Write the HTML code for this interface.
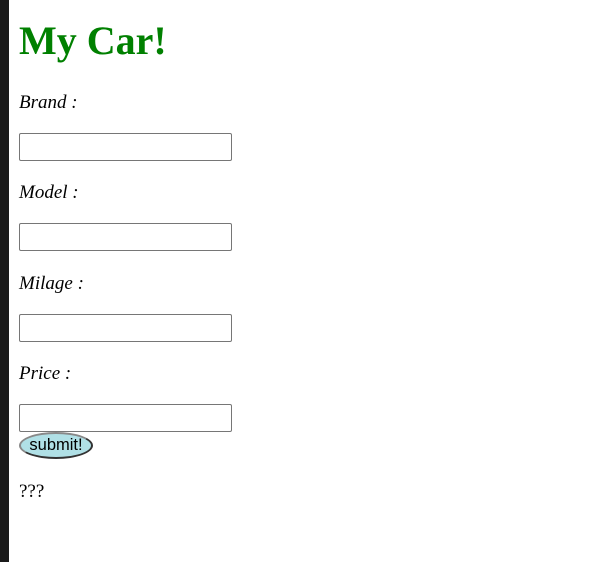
<!DOCTYPE html>
<html><head><style>
body{margin:0;width:590px;height:562px;background:#fff;position:relative;overflow:hidden;font-family:"Liberation Serif",serif;}
.bar{position:absolute;left:0;top:0;width:9px;height:562px;background:#1a1a1a;}
h1{position:absolute;left:19px;top:18px;margin:0;font-size:40px;line-height:46px;color:#008000;font-weight:bold;}
.l{position:absolute;left:19px;font-style:italic;font-size:19px;line-height:22px;margin:0;}
.i{position:absolute;left:19px;width:209px;height:24px;border:1px solid #767676;border-radius:2px;box-sizing:content-box;padding:1px;}
.b{position:absolute;left:19px;top:432px;width:70px;height:23px;border:2px solid #555;border-color:#888 #333 #333 #888;border-radius:50%;background:#b0e0e6;font-family:"Liberation Sans",sans-serif;font-size:16.5px;line-height:23px;text-align:center;}
.q{position:absolute;left:19px;top:481px;font-size:19px;line-height:22px;}
</style></head><body>
<div class="bar"></div>
<h1>My Car!</h1>
<div class="l" style="top:92px">Brand :</div>
<div class="i" style="top:133px"></div>
<div class="l" style="top:182px">Model :</div>
<div class="i" style="top:223px"></div>
<div class="l" style="top:273px">Milage :</div>
<div class="i" style="top:314px"></div>
<div class="l" style="top:363px">Price :</div>
<div class="i" style="top:404px"></div>
<div class="b">submit!</div>
<div class="q">???</div>
</body></html>
